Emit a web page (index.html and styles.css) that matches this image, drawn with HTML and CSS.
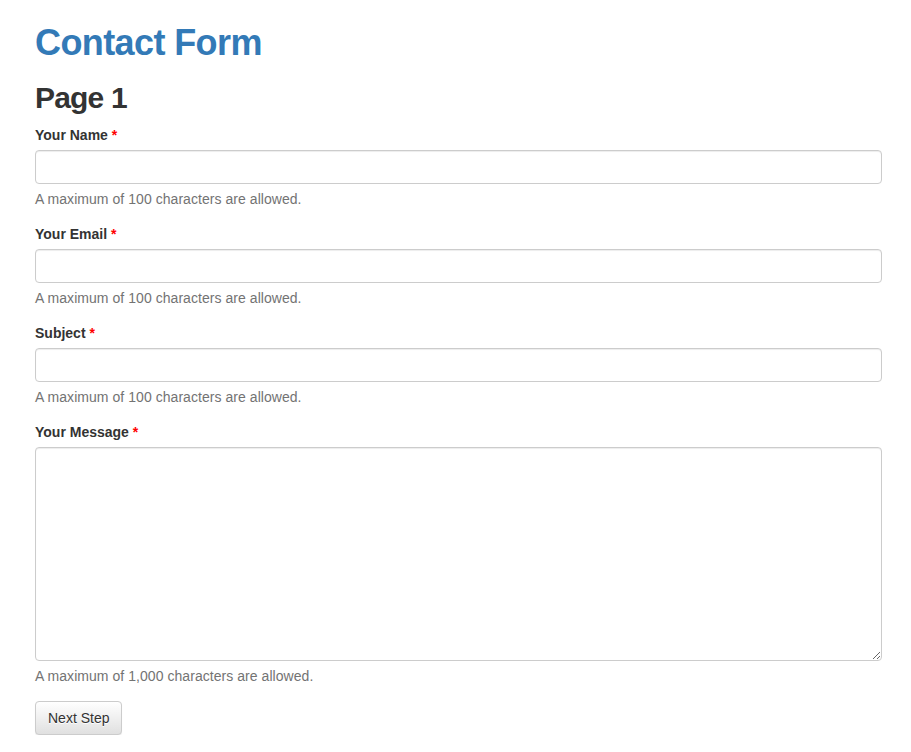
FILE: index.html
```html
<!DOCTYPE html>
<html>
<head>
<meta charset="utf-8">
<link rel="stylesheet" href="styles.css">
</head>
<body>
<div class="container">
  <h1 class="title">Contact Form</h1>
  <h2 class="page">Page 1</h2>
  <form class="form">
    <div class="group">
      <label class="label">Your Name <span class="req">*</span></label>
      <input class="control" type="text">
      <p class="help">A maximum of 100 characters are allowed.</p>
    </div>
    <div class="group">
      <label class="label">Your Email <span class="req">*</span></label>
      <input class="control" type="text">
      <p class="help">A maximum of 100 characters are allowed.</p>
    </div>
    <div class="group">
      <label class="label">Subject <span class="req">*</span></label>
      <input class="control" type="text">
      <p class="help">A maximum of 100 characters are allowed.</p>
    </div>
    <div class="group">
      <label class="label">Your Message <span class="req">*</span></label>
      <textarea class="control area"></textarea>
      <p class="help">A maximum of 1,000 characters are allowed.</p>
    </div>
    <button type="button" class="btn">Next Step</button>
  </form>
</div>
</body>
</html>
```
FILE: styles.css
```css
* { box-sizing: border-box; }
html, body { margin: 0; padding: 0; background: #fff; }
body {
  font-family: "Liberation Sans", Arial, Helvetica, sans-serif;
  font-size: 14px;
  line-height: 20px;
  color: #333;
}
.container {
  padding: 23px 29px 0 35px;
}
.title {
  margin: 0 0 10px;
  font-size: 36px;
  line-height: 40px;
  font-weight: 700;
  letter-spacing: -0.6px;
  color: #337ab7;
}
.page {
  margin: 18px 0 11px;
  font-size: 30px;
  line-height: 33px;
  font-weight: 700;
  letter-spacing: -0.8px;
  color: #333;
}
.form { margin: 0; }
.group {
  display: flex;
  flex-direction: column;
  margin-bottom: 15px;
}
.label {
  font-weight: bold;
  margin-bottom: 5px;
  font-size: 14px;
  line-height: 20px;
}
.req { color: #ff0000; }
.control {
  display: block;
  width: 100%;
  height: 34px;
  margin: 0;
  padding: 6px 12px;
  font: inherit;
  color: #555;
  background: #fff;
  border: 1px solid #ccc;
  border-radius: 4px;
  box-shadow: inset 0 1px 1px rgba(0,0,0,0.075);
}
.area {
  height: 214px;
  resize: vertical;
}
.help {
  margin: 5px 0 0;
  color: #737373;
  line-height: 20px;
  letter-spacing: 0.05px;
}
.btn {
  display: inline-block;
  height: 34px;
  padding: 6px 12px;
  font: inherit;
  color: #333;
  background-image: linear-gradient(to bottom, #fff 0%, #e0e0e0 100%);
  border: 1px solid #ccc;
  border-radius: 4px;
  box-shadow: inset 0 1px 0 rgba(255,255,255,0.15), 0 1px 1px rgba(0,0,0,0.075);
  text-shadow: 0 1px 0 #fff;
  margin-top: 0;
}
```
